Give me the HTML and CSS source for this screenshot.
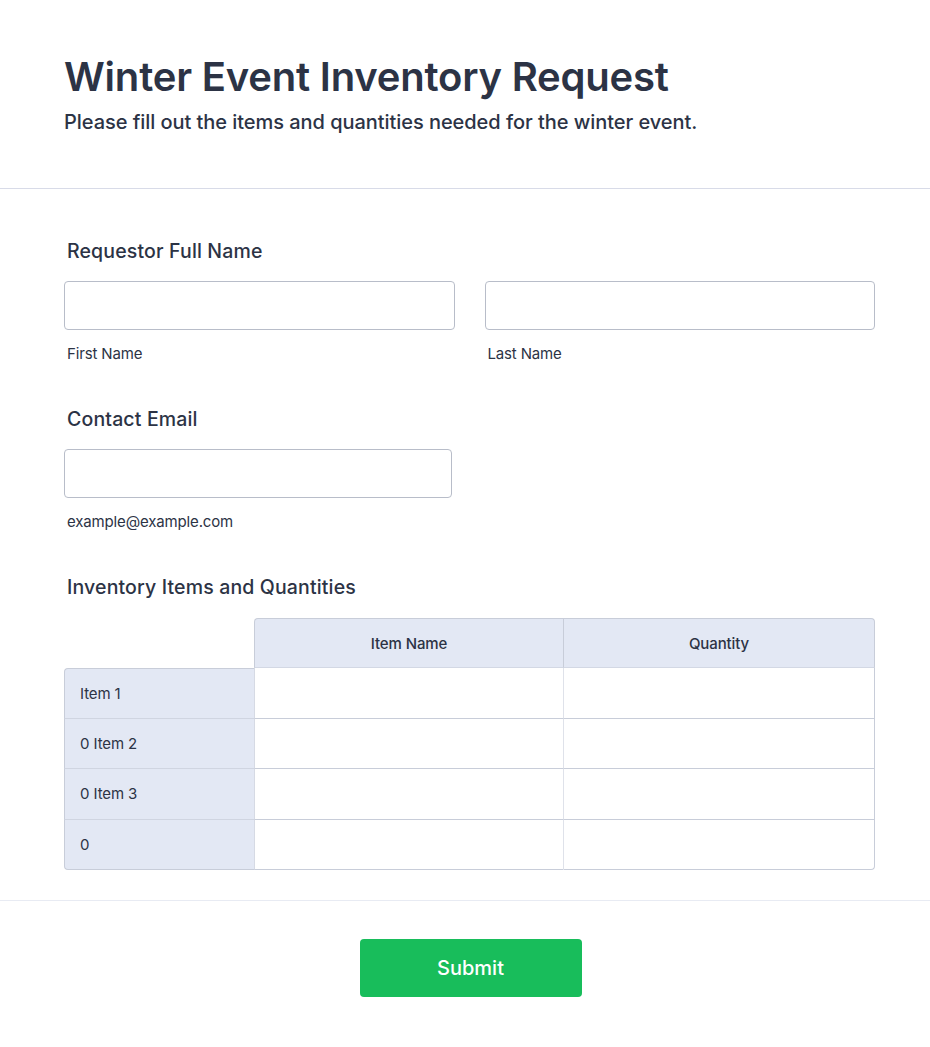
FILE: index.html
```html
<!DOCTYPE html>
<html lang="en">
<head>
<meta charset="utf-8">
<title>Winter Event Inventory Request</title>
<link rel="stylesheet" href="styles.css">
</head>
<body>
<div class="page">
  <header class="header">
    <h1 class="title">Winter Event Inventory Request</h1>
    <p class="subtitle">Please fill out the items and quantities needed for the winter event.</p>
  </header>

  <main class="form">
    <section class="field">
      <label class="label">Requestor Full Name</label>
      <div class="name-row">
        <div class="sub">
          <input class="input" type="text">
          <span class="sublabel">First Name</span>
        </div>
        <div class="sub">
          <input class="input" type="text">
          <span class="sublabel">Last Name</span>
        </div>
      </div>
    </section>

    <section class="field">
      <label class="label">Contact Email</label>
      <div class="email-row">
        <div class="sub">
          <input class="input" type="email">
          <span class="sublabel">example@example.com</span>
        </div>
      </div>
    </section>

    <section class="field field-last">
      <label class="label label-table">Inventory Items and Quantities</label>
      <table class="matrix">
        <thead>
          <tr>
            <th class="corner"></th>
            <th class="col-head col-first">Item Name</th>
            <th class="col-head col-last">Quantity</th>
          </tr>
        </thead>
        <tbody>
          <tr>
            <th class="row-head row-first">Item 1</th>
            <td class="cell"></td>
            <td class="cell cell-last"></td>
          </tr>
          <tr>
            <th class="row-head">0 Item 2</th>
            <td class="cell"></td>
            <td class="cell cell-last"></td>
          </tr>
          <tr>
            <th class="row-head">0 Item 3</th>
            <td class="cell"></td>
            <td class="cell cell-last"></td>
          </tr>
          <tr>
            <th class="row-head row-bottom">0</th>
            <td class="cell"></td>
            <td class="cell cell-last cell-corner"></td>
          </tr>
        </tbody>
      </table>
    </section>
  </main>

  <footer class="footer">
    <button class="submit" type="button">Submit</button>
  </footer>
</div>
</body>
</html>
```

FILE: styles.css
```css
* {
  box-sizing: border-box;
}

html, body {
  margin: 0;
  padding: 0;
  background: #ffffff;
}

body {
  font-family: Inter, "Noto Sans", "Liberation Sans", sans-serif;
  color: #2c3345;
}

.page {
  width: 930px;
}

.header {
  padding: 53px 55px 0 64px;
  height: 189px;
  border-bottom: 1px solid #d8dbe8;
}

.title {
  margin: 0;
  font-size: 40px;
  line-height: 48px;
  font-weight: 600;
  letter-spacing: -0.2px;
  color: #2c3345;
}

.subtitle {
  margin: 9px 0 0;
  font-size: 20px;
  line-height: 24px;
  font-weight: 500;
  letter-spacing: -0.05px;
  color: #2c3345;
}

.form {
  padding: 50px 55px 0 64px;
  border-bottom: 1px solid #e8ebf3;
}

.field {
  display: flex;
  flex-direction: column;
  margin-bottom: 44px;
}

.field-last {
  margin-bottom: 0;
  padding-bottom: 30px;
}

.label {
  display: block;
  margin: 0 0 18px 3px;
  font-size: 19.5px;
  line-height: 24px;
  font-weight: 500;
  letter-spacing: 0.15px;
  color: #2c3345;
}

.label-table {
  margin-bottom: 19px;
}

.name-row {
  display: flex;
  gap: 30px;
}

.name-row .sub {
  flex: 1;
}

.email-row {
  display: flex;
}

.email-row .sub {
  width: 388px;
}

.sub {
  display: flex;
  flex-direction: column;
}

.input {
  display: block;
  width: 100%;
  height: 49px;
  margin: 0;
  border: 1px solid #b8bdc9;
  border-radius: 4px;
  background: #ffffff;
  font-family: inherit;
  font-size: 16px;
  padding: 0 12px;
  outline: none;
}

.sublabel {
  display: block;
  margin: 15px 0 0 3px;
  font-size: 15px;
  line-height: 18px;
  letter-spacing: -0.15px;
  color: #2c3345;
}

.matrix {
  width: 811px;
  border-collapse: separate;
  border-spacing: 0;
  table-layout: fixed;
  font-size: 15px;
  letter-spacing: -0.1px;
  color: #2c3345;
}

.matrix th,
.matrix td {
  padding: 0;
}

.corner {
  width: 190px;
  background: transparent;
  border: none;
}

.col-head {
  height: 50px;
  background: #e3e8f4;
  font-weight: 500;
  text-align: center;
  border-top: 1px solid #c8cdd9;
  border-left: 1px solid #c8cdd9;
  border-bottom: 1px solid #d3d8e4;
}

.col-first {
  width: 309px;
  border-top-left-radius: 4px;
}

.col-last {
  border-right: 1px solid #c8cdd9;
  border-top-right-radius: 4px;
}

.row-head {
  height: 50.5px;
  background: #e3e8f4;
  font-weight: 400;
  text-align: left;
  padding-left: 15px !important;
  border-left: 1px solid #c8cdd9;
  border-bottom: 1px solid #d0d5e1;
}

.row-first {
  border-top: 1px solid #c8cdd9;
  border-top-left-radius: 4px;
}

.row-bottom {
  border-bottom: 1px solid #c8cdd9;
  border-bottom-left-radius: 4px;
}

.cell {
  height: 50.5px;
  background: #ffffff;
  border-left: 1px solid #d6dae4;
  border-bottom: 1px solid #c8cdd9;
}

.cell-last {
  border-left: 1px solid #dfe2ea;
  border-right: 1px solid #c8cdd9;
}

.cell-corner {
  border-bottom-right-radius: 4px;
}

.footer {
  display: flex;
  justify-content: center;
  padding: 38px 54px 50px 65px;
}

.submit {
  width: 222px;
  height: 58px;
  border: none;
  border-radius: 4px;
  background: #18bd5b;
  color: #ffffff;
  font-family: inherit;
  font-size: 20px;
  font-weight: 500;
  cursor: pointer;
}
```
